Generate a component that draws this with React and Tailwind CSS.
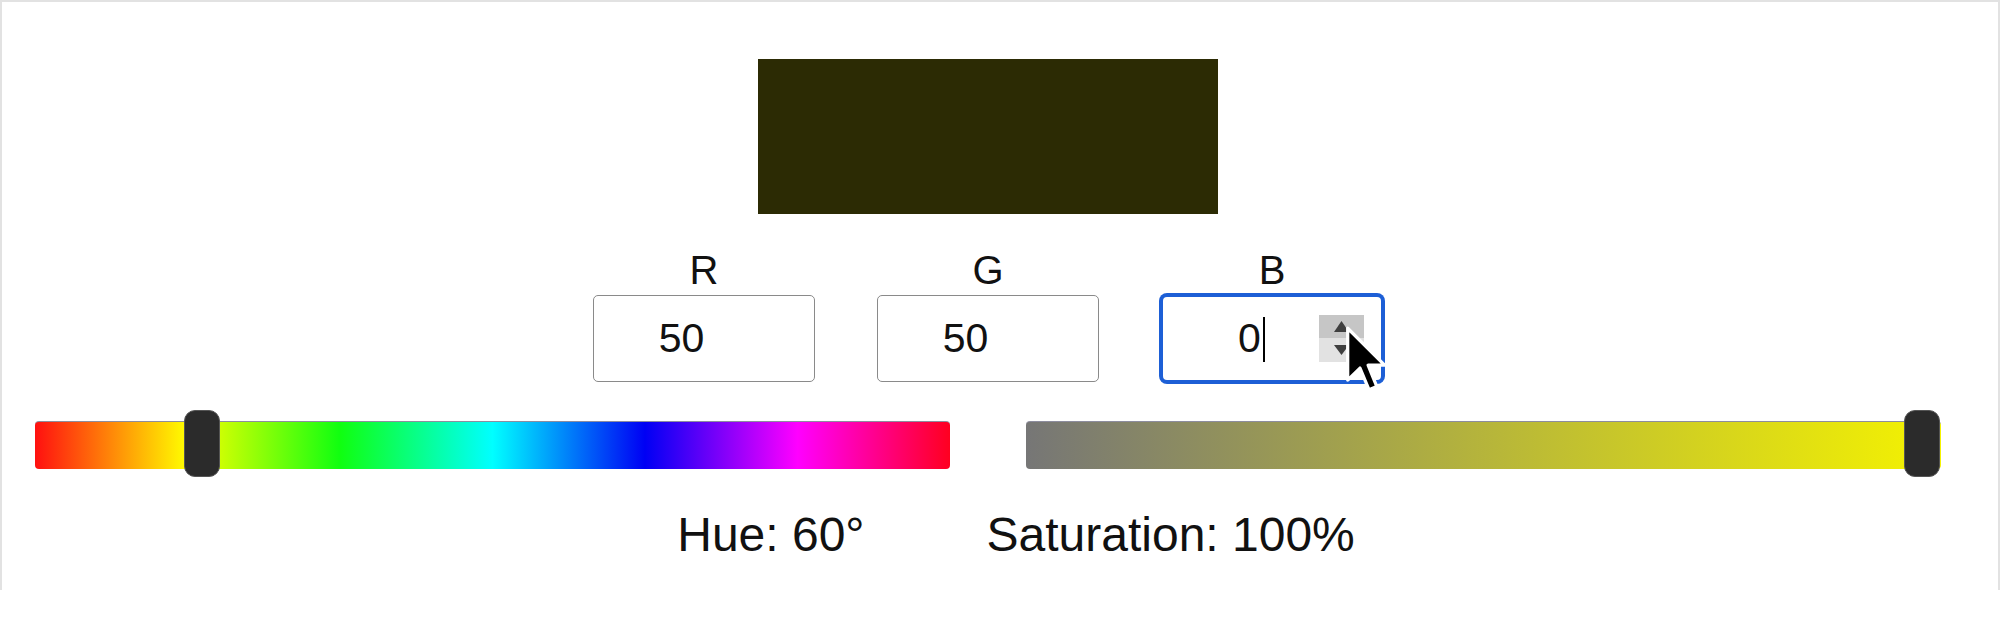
import React from "react";

const Spinner = () => (
  <div className="absolute left-[156px] top-[18px] w-[45px] h-[47px] flex flex-col">
    <div className="h-[23px] bg-[#c6c6c6] flex items-center justify-center">
      <svg width="15" height="11" viewBox="0 0 15 11">
        <path d="M7.5 0 L15 11 L0 11 Z" fill="#3f3f3f" />
      </svg>
    </div>
    <div className="h-[24px] bg-[#e2e2e2] flex items-center justify-center">
      <svg width="15" height="10" viewBox="0 0 15 10">
        <path d="M0 0 L15 0 L7.5 10 Z" fill="#3f3f3f" />
      </svg>
    </div>
  </div>
);

const Cursor = () => (
  <svg
    className="absolute left-[181px] top-[28px]"
    width="43"
    height="68"
    viewBox="0 0 13 21"
  >
    <path
      d="M1 1 L1 17 L4.8 13.3 L7.6 20 L10 19 L7.3 12.4 L12.4 12.4 Z"
      fill="#000"
      stroke="#fff"
      strokeWidth="1"
      strokeLinejoin="round"
    />
  </svg>
);

const ChannelInput = ({ label, value, focused }) => (
  <div className="flex flex-col items-center w-[222px]">
    <div className="text-[40px] leading-none h-[40px] mb-[5px]">{label}</div>
    <div
      className={
        focused
          ? "relative w-[222px] h-[87px] rounded-[6px] border-2 border-[#1d5fd6] ring-2 ring-[#1d5fd6] bg-white flex items-center justify-center pl-[9px] pr-[54px]"
          : "relative w-[222px] h-[87px] rounded-[5px] border border-[#8a8a8a] bg-white flex items-center justify-center pl-[10px] pr-[55px]"
      }
    >
      <span className="relative text-[41px] leading-none">
        {value}
        {focused && (
          <span className="absolute left-full top-[-1px] ml-[2px] w-[2px] h-[45px] bg-black" />
        )}
      </span>
      {focused && <Spinner />}
      {focused && <Cursor />}
    </div>
  </div>
);

const Slider = ({ track, thumbLeft }) => (
  <div className="relative w-[915px] h-[67px]">
    <div
      className={
        "mt-[11px] h-[48px] w-full rounded-[4px] border-t border-[#8d8d9e] " + track
      }
    />
    <div
      className="absolute top-0 w-[36px] h-[67px] rounded-[11px] bg-[#2b2b2b] border border-[#555]"
      style={{ left: thumbLeft }}
    />
  </div>
);

export default function App() {
  return (
    <div className="w-[2000px] h-[629px] bg-white text-[#111] font-['Liberation_Sans',Arial,sans-serif]">
      <div className="h-[590px] border-x-2 border-t-2 border-[#e2e2e2] pr-[24px] flex flex-col items-center">
        <div className="mt-[57px] w-[460px] h-[155px] bg-[#2c2b04]" />

        <div className="mt-[36px] flex gap-[62px]">
          <ChannelInput label="R" value="50" />
          <ChannelInput label="G" value="50" />
          <ChannelInput label="B" value="0" focused />
        </div>

        <div className="mt-[28px] flex gap-[76px]">
          <Slider
            track="bg-[linear-gradient(to_right,#ff1010,#ffff00,#10ff10,#00ffff,#0000f4,#ff00ff,#ff0020)]"
            thumbLeft={149}
          />
          <Slider
            track="bg-[linear-gradient(to_right,#767676,#f5f300)]"
            thumbLeft={878}
          />
        </div>

        <div className="mt-[34px] pl-[56px] flex gap-[122px] text-[48px] leading-none">
          <span>Hue: 60°</span>
          <span>Saturation: 100%</span>
        </div>
      </div>
    </div>
  );
}
